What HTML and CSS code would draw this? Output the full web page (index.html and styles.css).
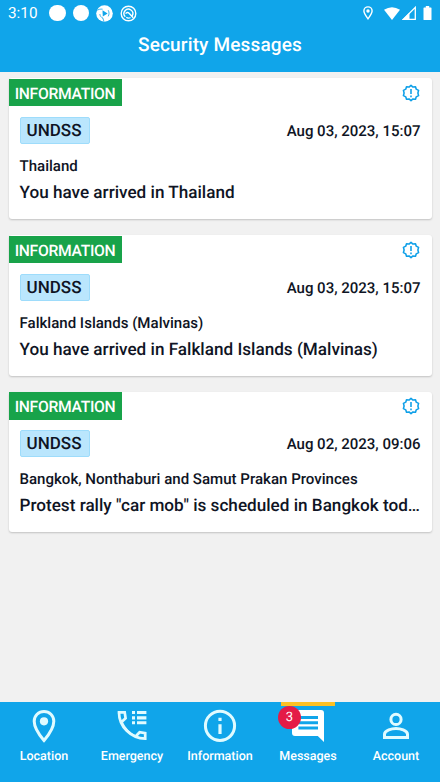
FILE: index.html
```html
<!DOCTYPE html>
<html lang="en">
<head>
<meta charset="utf-8">
<title>Security Messages</title>
<link rel="stylesheet" href="styles.css">
</head>
<body>
<svg class="defs" width="0" height="0">
  <symbol id="alert" viewBox="0 0 24 24">
    <path d="M12 1.8 14.6 4.1 18 3.6 19 6.9 22.1 8.5 21.2 12 22.1 15.5 19 17.1 18 20.4 14.6 19.9 12 22.2 9.4 19.9 6 20.4 5 17.1 1.9 15.5 2.8 12 1.9 8.5 5 6.9 6 3.6 9.4 4.1Z" fill="none" stroke="currentColor" stroke-width="2.1" stroke-linejoin="round"/>
    <path d="M12 6.5v6.8M12 15.3v2.3" stroke="currentColor" stroke-width="2.1"/>
  </symbol>
</svg>
<div class="app">
  <header class="header">
    <div class="status">
      <span class="time">3:10</span>
      <span class="dot"></span>
      <span class="dot"></span>
      <svg class="status-icon" viewBox="0 0 17 17"><circle cx="8.5" cy="8.5" r="8.3" fill="#fff"/><path d="M6.5 5.3 11.6 8.5 6.8 11.6Z" fill="#10a5ea"/><path d="M0 6C2 4.4 4.4 3.8 6.600 4.200M12.200 5.200C13.400 7.400 13.200 9.600 12.200 11.400M7 13.200C5 12.400 4 10.800 3.800 9M6.800 13 8 16.600" fill="none" stroke="#10a5ea" stroke-width=".8"/></svg>
      <svg class="status-icon" viewBox="0 0 17 17" fill="none" stroke="#fff"><circle cx="8.5" cy="8.5" r="7.3" stroke-width="1.4"/><path d="M5.3 11.7A4.4 4.4 0 1 1 12.2 10.8M5.6 8.7C6.6 7.2 8 7.3 9.1 8.3L13.2 12.8M6.3 12.3c1.2.9 2.9 1 4.2.2" stroke-width="1.4"/></svg>
      <svg class="pin-small" viewBox="0 0 10 14" fill="none" stroke="#fff"><path d="M5 12.8C3 10 .9 7.4.9 5A4.1 4.1 0 0 1 9.1 5C9.1 7.4 7 10 5 12.8Z" stroke-width="1.4"/><circle cx="5" cy="5" r="1.7" fill="#fff" stroke="none"/></svg>
      <svg class="wifi" viewBox="0 0 16 13"><path d="M0 2.8Q8-2.5 16 2.8L8 13Z" fill="#fff"/></svg>
      <svg class="signal" viewBox="0 0 14 14"><path d="M13.3 1.4V13.3H1.4Z" fill="none" stroke="#fff" stroke-width="1.3"/><path d="M0 14 7.5 6.5V14Z" fill="#fff"/></svg>
      <svg class="battery" viewBox="0 0 8 14"><path d="M2.3 0h3.4v1.4H7.4q.6 0 .6.6v11.4q0 .6-.6.6H.6Q0 14 0 13.4V2Q0 1.4.6 1.4h1.7Z" fill="#fff"/></svg>
    </div>
    <h1 class="title">Security Messages</h1>
  </header>
  <main class="list">
    <article class="card">
      <div class="card-top"><span class="tag">INFORMATION</span><svg class="alert"><use href="#alert"/></svg></div>
      <div class="meta"><span class="source">UNDSS</span><time class="date">Aug 03, 2023, 15:07</time></div>
      <p class="place">Thailand</p>
      <p class="message">You have arrived in Thailand</p>
    </article>
    <article class="card">
      <div class="card-top"><span class="tag">INFORMATION</span><svg class="alert"><use href="#alert"/></svg></div>
      <div class="meta"><span class="source">UNDSS</span><time class="date">Aug 03, 2023, 15:07</time></div>
      <p class="place">Falkland Islands (Malvinas)</p>
      <p class="message">You have arrived in Falkland Islands (Malvinas)</p>
    </article>
    <article class="card">
      <div class="card-top"><span class="tag">INFORMATION</span><svg class="alert"><use href="#alert"/></svg></div>
      <div class="meta"><span class="source">UNDSS</span><time class="date">Aug 02, 2023, 09:06</time></div>
      <p class="place">Bangkok, Nonthaburi and Samut Prakan Provinces</p>
      <p class="message">Protest rally "car mob" is scheduled in Bangkok tod…</p>
    </article>
  </main>
  <nav class="nav">
    <a class="tab"><svg class="tab-icon" viewBox="0 0 36 36"><path d="M18 32.5C12.5 26 8.2 19.6 8.2 13.2A9.8 9.8 0 0 1 27.8 13.2C27.8 19.6 23.5 26 18 32.5Z" fill="none" stroke="currentColor" stroke-width="3"/><circle cx="18" cy="13.3" r="4.1" fill="currentColor"/></svg><span>Location</span></a>
    <a class="tab"><svg class="tab-icon" viewBox="0 0 36 36"><path d="M5 4.400H10.700L11.600 10.200 7.600 14M21.800 28.200 25.600 24.200 31.200 25.200V30.600C17 30.600 5 18.600 5 4.400" fill="none" stroke="currentColor" stroke-width="2.700" stroke-linecap="square"/><path d="M8 14C11 20.500 15.500 25.200 21.800 28.200" fill="none" stroke="currentColor" stroke-width="1.500"/><path d="M18 3h3v3h-3ZM23 3h9.400v3H23ZM18 8.200h3v3.200h-3ZM23 8.200h9.400v3.200H23ZM18 13.300h3v3h-3ZM23 13.300h9.400v3H23Z" fill="currentColor"/></svg><span>Emergency</span></a>
    <a class="tab"><svg class="tab-icon" viewBox="0 0 36 36"><circle cx="18" cy="17.8" r="14.6" fill="none" stroke="currentColor" stroke-width="3"/><path d="M16.4 9.8h3.2V13h-3.2ZM16.4 16.2h3.2v9.7h-3.2Z" fill="currentColor"/></svg><span>Information</span></a>
    <a class="tab active"><svg class="tab-icon" viewBox="0 0 36 36"><path d="M5 2H31Q34 2 34 5V34L27.8 27.9H5Q2 27.9 2 25V5Q2 2 5 2Z" fill="#fff"/><path d="M8.4 8.1H28v3H8.4ZM8.4 13.3H28v3H8.4ZM8.4 18.5H28v3H8.4Z" fill="#10a5ea"/></svg><span>Messages</span><b class="count">3</b></a>
    <a class="tab"><svg class="tab-icon" viewBox="0 0 36 36" fill="none" stroke="currentColor" stroke-width="3"><circle cx="18" cy="11.4" r="5.1"/><path d="M6.5 29.4V26.2C6.5 22.2 14 20.4 18 20.4S29.5 22.2 29.5 26.2V29.4Z"/></svg><span>Account</span></a>
  </nav>
</div>
</body>
</html>
```

FILE: styles.css
```css
* { box-sizing: border-box; }
body { margin: 0; font-family: Roboto, "Liberation Sans", sans-serif; color: #0f1424; background: #f1f1f1; text-rendering: geometricPrecision; }
.defs { position: absolute; }
.app { width: 440px; height: 782px; display: flex; flex-direction: column; overflow: hidden; }
.header { height: 72.4px; flex: none; background: #10a5ea; color: #fff; }
.status { height: 26px; display: flex; align-items: center; padding: 0 8px 0 8px; }
.time { width: 41px; font-size: 15.3px; line-height: 28px; }
.dot { width: 16.5px; height: 16.5px; margin-right: 7px; border-radius: 50%; background: #fff; }
.status-icon { width: 17px; height: 17px; margin-right: 7px; }
.pin-small { width: 10px; height: 14px; margin-left: auto; margin-right: 11px; }
.wifi { width: 16px; height: 13px; margin-right: 2px; }
.signal { width: 14px; height: 14px; margin-right: 7px; }
.battery { width: 9px; height: 14px; }
.title { margin: 6px 0 0; text-align: center; font-size: 19px; line-height: 26px; font-weight: 500; letter-spacing: .15px; }
.list { flex: 1; padding: 5.9px 8.5px 0; display: flex; flex-direction: column; gap: 16px; }
.card { height: 140.7px; flex: none; background: #fff; border-radius: 3px; box-shadow: 0 1px 2px rgba(0, 0, 0, .2); }
.card-top { height: 28.2px; display: flex; justify-content: space-between; padding-top: .7px; }
.tag { width: 113px; height: 27.5px; background: #18a34a; color: #fff; font-size: 15.7px; font-weight: 500; letter-spacing: -.32px; line-height: 29px; text-align: center; }
.alert { width: 18px; height: 18px; margin: 5px 11.5px 0 0; color: #10a0e8; }
.meta { display: flex; align-items: center; justify-content: space-between; height: 27px; margin: 10.5px 11px 0; }
.source { width: 70px; height: 27px; border: 1px solid #9edcfb; border-radius: 2px; background: #bae6fd; font-size: 17px; font-weight: 500; line-height: 26.5px; padding-right: 1px; text-align: center; }
.date { font-size: 15px; font-weight: 500; line-height: 27px; padding-top: 2px; }
.place { margin: 12px 11px 0; font-size: 15.05px; font-weight: 500; line-height: 20px; }
.message { margin: 5px 11px 0; font-size: 17.14px; font-weight: 500; line-height: 24px; white-space: nowrap; }
.nav { height: 80px; flex: none; display: grid; grid-template-columns: repeat(5, 1fr); background: #10a5ea; }
.tab { position: relative; display: flex; flex-direction: column; align-items: center; padding-top: 6px; color: #e0fbff; font-size: 12.5px; font-weight: 500; line-height: 16px; }
.tab span { margin-top: 5px; color: #fff; }
.tab-icon { width: 36px; height: 36px; }
.active::before { content: ""; position: absolute; top: 0; left: 17px; width: 54px; height: 4px; background: #fcc024; }
.count { position: absolute; top: 4px; left: 14px; width: 23px; height: 23px; border-radius: 50%; background: #e41b47; color: #fff; font-size: 13px; font-weight: 400; line-height: 24px; text-align: center; }
```
